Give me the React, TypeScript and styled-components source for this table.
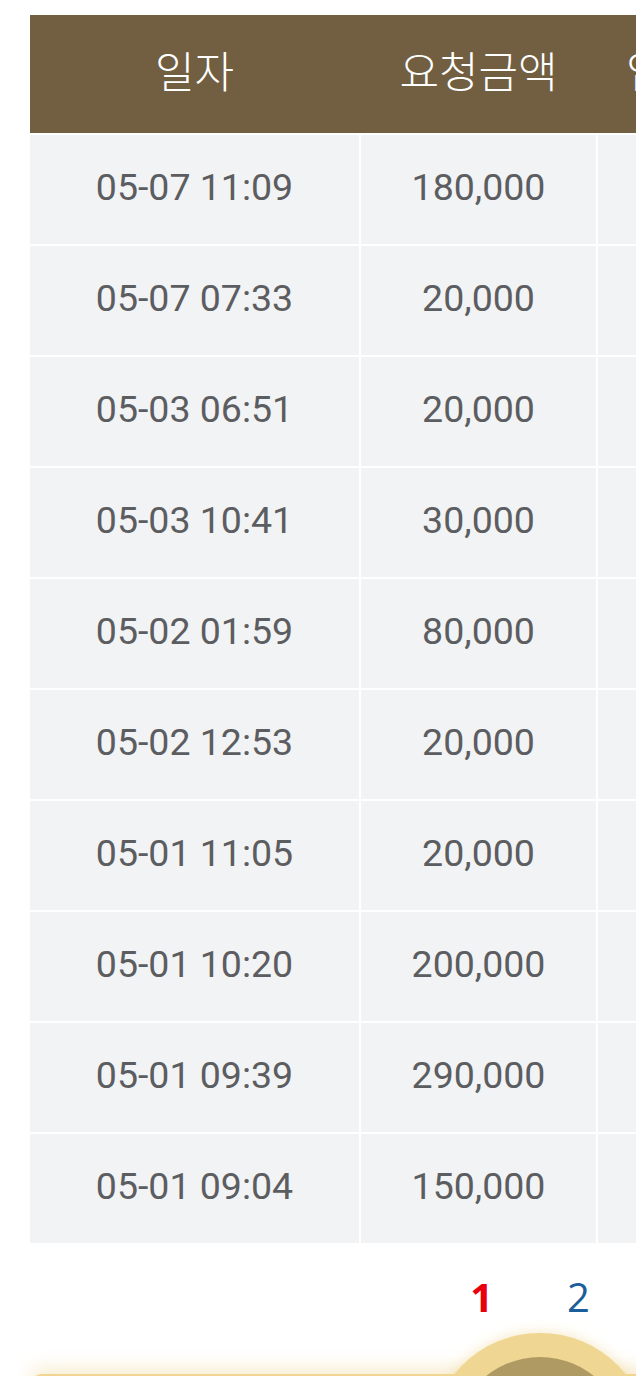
import React from "react";
import styled, { createGlobalStyle } from "styled-components";

const GlobalStyle = createGlobalStyle`
  html, body {
    margin: 0;
    padding: 0;
    background: #ffffff;
    overflow: hidden;
  }
  body {
    font-family: Roboto, "Noto Sans CJK KR", sans-serif;
  }
`;

const Page = styled.div`
  width: 1070px;
  padding: 15px 0 0 30px;
  box-sizing: border-box;
`;

const TableWrap = styled.div`
  width: 1000px;
  display: flex;
  flex-direction: column;
  gap: 2px;
`;

const HeaderRow = styled.div`
  display: grid;
  grid-template-columns: 329px 235px 214px 1fr;
  column-gap: 2px;
  height: 118px;
  background: #725f42;
`;

const HeadCell = styled.div`
  display: flex;
  align-items: center;
  justify-content: center;
  padding-bottom: 10px;
  box-sizing: border-box;
  color: #ffffff;
  font-family: "Noto Sans CJK KR", Roboto, sans-serif;
  font-size: 43px;
  font-weight: 300;
  white-space: nowrap;
`;

const Row = styled.div`
  display: grid;
  grid-template-columns: 329px 235px 214px 1fr;
  column-gap: 2px;
  height: 109px;
`;

const Cell = styled.div`
  display: flex;
  align-items: center;
  justify-content: center;
  padding-bottom: 5px;
  box-sizing: border-box;
  background: #f2f3f5;
  color: #5c5d60;
  font-family: Roboto, "Noto Sans CJK KR", sans-serif;
  font-size: 37.5px;
  white-space: nowrap;
`;

const Pagination = styled.div`
  width: 1000px;
  height: 108px;
  display: flex;
  align-items: center;
  justify-content: center;
  gap: 74px;
`;

const PageNum = styled.span<{ $active?: boolean }>`
  font-family: "Open Sans", Roboto, sans-serif;
  font-size: 40px;
  font-weight: ${(p) => (p.$active ? 700 : 400)};
  color: ${(p) => (p.$active ? "#e8000f" : "#1b5e9c")};
  line-height: 1;
`;

const Footer = styled.div`
  position: relative;
  width: 1000px;
  margin-top: 23px;
  height: 80px;
`;

const Bar = styled.div`
  height: 80px;
  border-radius: 12px;
  background: linear-gradient(#f0d690 0, #f0d690 2px, #fbf3dc 2px);
  box-shadow: 0 -6px 18px rgba(240, 214, 150, 0.45);
`;

const HomeButton = styled.div`
  position: absolute;
  left: 400px;
  top: -41px;
  width: 220px;
  height: 220px;
  border-radius: 50%;
  background: #efd692;
  box-shadow: 0 0 14px rgba(240, 214, 150, 0.6);
  display: flex;
  align-items: center;
  justify-content: center;
`;

const HomeInner = styled.div`
  width: 172px;
  height: 172px;
  border-radius: 50%;
  background: #ae9a62;
`;

const rows: [string, string, string, string][] = [
  ["05-07 11:09", "180,000", "", ""],
  ["05-07 07:33", "20,000", "", ""],
  ["05-03 06:51", "20,000", "", ""],
  ["05-03 10:41", "30,000", "", ""],
  ["05-02 01:59", "80,000", "", ""],
  ["05-02 12:53", "20,000", "", ""],
  ["05-01 11:05", "20,000", "", ""],
  ["05-01 10:20", "200,000", "", ""],
  ["05-01 09:39", "290,000", "", ""],
  ["05-01 09:04", "150,000", "", ""],
];

export default function App() {
  return (
    <>
      <GlobalStyle />
      <Page>
        <TableWrap>
          <HeaderRow>
            <HeadCell>일자</HeadCell>
            <HeadCell>요청금액</HeadCell>
            <HeadCell>입금자명</HeadCell>
            <HeadCell>상태</HeadCell>
          </HeaderRow>
          {rows.map((r, i) => (
            <Row key={i}>
              <Cell>{r[0]}</Cell>
              <Cell>{r[1]}</Cell>
              <Cell>{r[2]}</Cell>
              <Cell>{r[3]}</Cell>
            </Row>
          ))}
        </TableWrap>
        <Pagination>
          <PageNum $active>1</PageNum>
          <PageNum>2</PageNum>
        </Pagination>
        <Footer>
          <Bar />
          <HomeButton>
            <HomeInner />
          </HomeButton>
        </Footer>
      </Page>
    </>
  );
}
